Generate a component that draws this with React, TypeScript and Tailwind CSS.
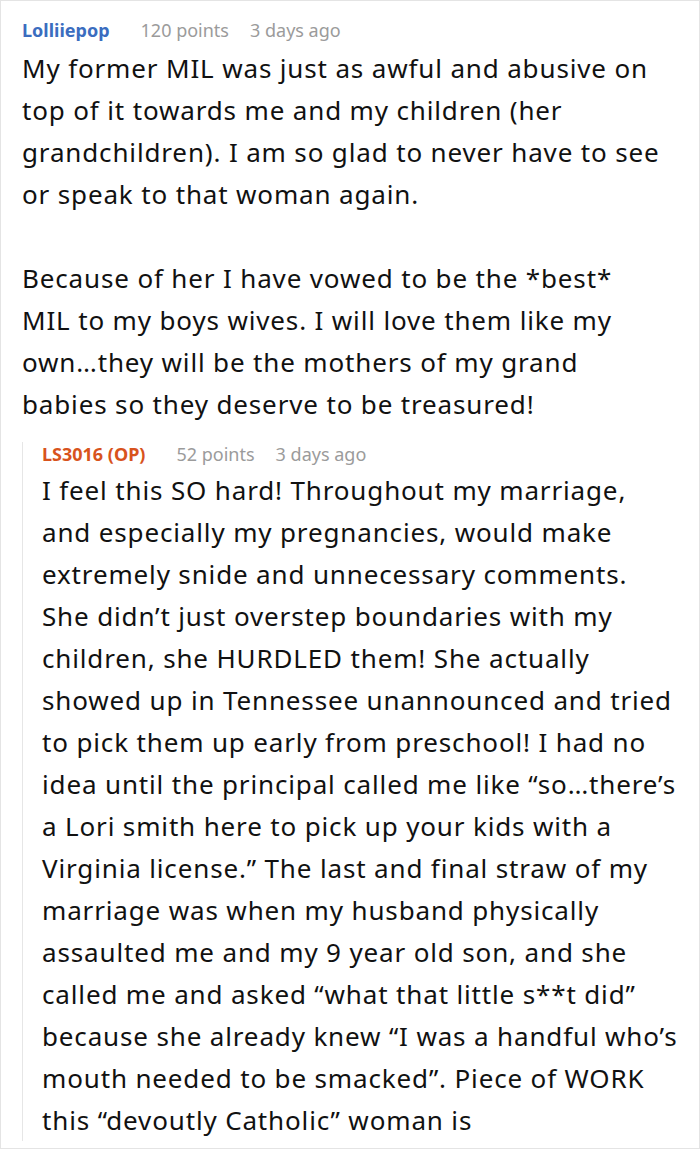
import React from "react";

const font = { fontFamily: '"Noto Sans", "Open Sans", sans-serif' };

const first1 = [
  "My former MIL was just as awful and abusive on",
  "top of it towards me and my children (her",
  "grandchildren). I am so glad to never have to see",
  "or speak to that woman again.",
];
const first2 = [
  "Because of her I have vowed to be the *best*",
  "MIL to my boys wives. I will love them like my",
  "own…they will be the mothers of my grand",
  "babies so they deserve to be treasured!",
];
const reply = [
  "I feel this SO hard! Throughout my marriage,",
  "and especially my pregnancies, would make",
  "extremely snide and unnecessary comments.",
  "She didn’t just overstep boundaries with my",
  "children, she HURDLED them! She actually",
  "showed up in Tennessee unannounced and tried",
  "to pick them up early from preschool! I had no",
  "idea until the principal called me like “so…there’s",
  "a Lori smith here to pick up your kids with a",
  "Virginia license.” The last and final straw of my",
  "marriage was when my husband physically",
  "assaulted me and my 9 year old son, and she",
  "called me and asked “what that little s**t did”",
  "because she already knew “I was a handful who’s",
  "mouth needed to be smacked”. Piece of WORK",
  "this “devoutly Catholic” woman is",
];

function Lines({ lines }: { lines: string[] }) {
  return (
    <>
      {lines.map((l, i) => (
        <span key={i} className="block whitespace-nowrap">
          {l}
        </span>
      ))}
    </>
  );
}

export default function App() {
  return (
    <div
      className="w-[700px] h-[1149px] overflow-hidden bg-white border border-[#e4e4e4] pl-[21px] pt-[16.5px]"
      style={font}
    >
      <div className="flex items-baseline text-[18px] leading-[24px]">
        <span className="font-bold text-[#3b6dbf]">Lolliiepop</span>
        <span className="ml-[31px] text-[#9b9b9b]">120 points</span>
        <span className="ml-[21px] text-[#9b9b9b]">3 days ago</span>
      </div>
      <div className="mt-[5px] text-[26px] leading-[42px] tracking-[0.85px] text-[#111111]">
        <p>
          <Lines lines={first1} />
        </p>
        <p className="mt-[42px]">
          <Lines lines={first2} />
        </p>
      </div>
      <div className="mt-[27.4px] border-l border-[#e6e6e6] pl-[19px]">
        <div className="-mt-[9.5px] flex items-baseline text-[18px] leading-[24px]">
          <span className="font-bold text-[#d8531d]">LS3016 (OP)</span>
          <span className="ml-[31px] text-[#9b9b9b]">52 points</span>
          <span className="ml-[21px] text-[#9b9b9b]">3 days ago</span>
        </div>
        <p className="mt-[3px] -mb-[9.5px] text-[26px] leading-[42px] tracking-[0.85px] text-[#111111]">
          <Lines lines={reply} />
        </p>
      </div>
    </div>
  );
}
